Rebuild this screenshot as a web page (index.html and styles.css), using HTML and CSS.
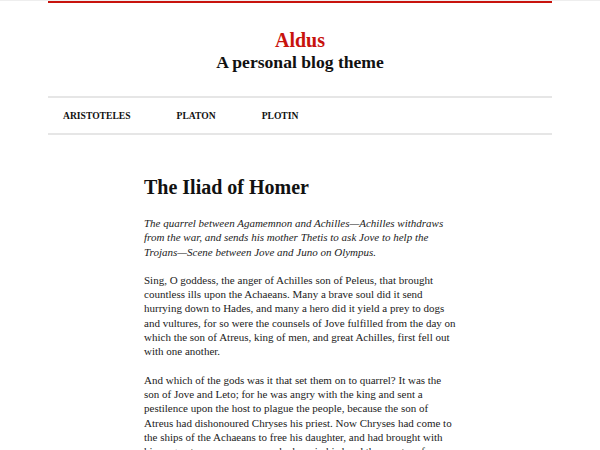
FILE: index.html
```html
<!DOCTYPE html>
<html lang="en">
<head>
<meta charset="utf-8">
<title>Aldus</title>
<link rel="stylesheet" href="styles.css">
</head>
<body>
<div class="page">
  <header class="site-header">
    <h1 class="site-title">Aldus</h1>
    <p class="site-desc">A personal blog theme</p>
  </header>
  <nav class="site-nav">
    <a href="#">Aristoteles</a>
    <a href="#">Platon</a>
    <a href="#">Plotin</a>
  </nav>
  <main class="content">
    <h2 class="entry-title">The Iliad of Homer</h2>
    <p class="lead">The quarrel between Agamemnon and Achilles—Achilles withdraws from the war, and sends his mother Thetis to ask Jove to help the Trojans—Scene between Jove and Juno on Olympus.</p>
    <p>Sing, O goddess, the anger of Achilles son of Peleus, that brought countless ills upon the Achaeans. Many a brave soul did it send hurrying down to Hades, and many a hero did it yield a prey to dogs and vultures, for so were the counsels of Jove fulfilled from the day on which the son of Atreus, king of men, and great Achilles, first fell out with one another.</p>
    <p>And which of the gods was it that set them on to quarrel? It was the son of Jove and Leto; for he was angry with the king and sent a pestilence upon the host to plague the people, because the son of Atreus had dishonoured Chryses his priest. Now Chryses had come to the ships of the Achaeans to free his daughter, and had brought with him a great ransom: moreover he bore in his hand the sceptre of Apollo wreathed with a suppliant's wreath.</p>
  </main>
</div>
</body>
</html>
```

FILE: styles.css
```css
html, body {
  margin: 0;
  padding: 0;
  background: #fff;
}
body {
  font-family: "Liberation Serif", serif;
  color: #222;
  border-top: 1px solid #eee;
}
.page {
  width: 504px;
  margin: -1px auto 0;
  border-top: 3px solid #c8130d;
}
.site-header {
  text-align: center;
  padding: 26px 0 23px;
  border-bottom: 2px solid #e6e6e6;
}
.site-title {
  margin: 0;
  font-size: 20px;
  line-height: 22px;
  color: #c8130d;
  font-weight: bold;
}
.site-desc {
  margin: 0;
  font-size: 17.6px;
  line-height: 22px;
  font-weight: bold;
  color: #111;
}
.site-nav {
  display: flex;
  gap: 46px;
  padding: 0 15px;
  height: 35px;
  align-items: center;
  border-bottom: 2px solid #e6e6e6;
}
.site-nav a {
  font-size: 9.6px;
  font-weight: bold;
  text-transform: uppercase;
  color: #111;
  text-decoration: none;
}
.content {
  width: 312px;
  margin: 0 auto;
  padding-top: 38px;
  font-size: 11px;
  line-height: 14.3px;
}
.entry-title {
  margin: 0 0 15px;
  font-size: 20px;
  line-height: 28px;
  color: #111;
}
.content p {
  margin: 0 0 14px;
}
.lead {
  font-style: italic;
}
```
